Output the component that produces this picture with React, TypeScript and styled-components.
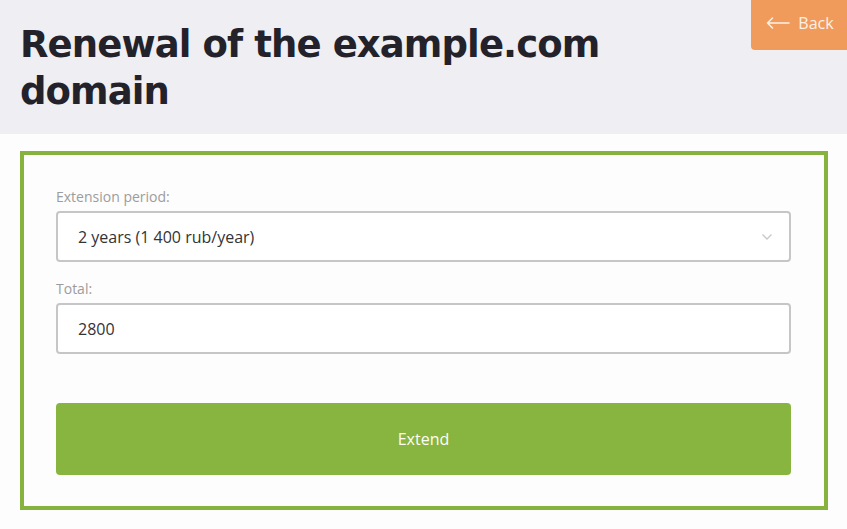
import React from 'react';
import styled, { createGlobalStyle } from 'styled-components';

const GlobalStyle = createGlobalStyle`
    html, body {
        margin: 0;
        padding: 0;
        background: #fdfdfd;
        font-family: "Open Sans", "Liberation Sans", sans-serif;
    }
`;

const App: React.FC = () => {
    return (
        <Page>
            <GlobalStyle />
            <Header>
                <Title>Renewal of the example.com domain</Title>
                <BackButton>
                    <svg width="24" height="12" viewBox="0 0 24 12" fill="none">
                        <path d="M23 6H1.5M6.5 1L1.5 6l5 5" stroke="#fdf1e6" strokeWidth="1.5" strokeLinecap="round" strokeLinejoin="round" />
                    </svg>
                    Back
                </BackButton>
            </Header>
            <FormBox>
                <Field>
                    <Label>Extension period:</Label>
                    <SelectBox>
                        <span>2 years (1 400 rub/year)</span>
                        <svg width="12" height="8" viewBox="0 0 12 8" fill="none">
                            <path d="M1.5 1.5L6 6l4.5-4.5" stroke="#c8c8c8" strokeWidth="1.4" />
                        </svg>
                    </SelectBox>
                </Field>
                <Field>
                    <Label>Total:</Label>
                    <InputBox>2800</InputBox>
                </Field>
                <ExtendButton>Extend</ExtendButton>
            </FormBox>
        </Page>
    );
};

export default App;

const Page = styled.div`
    width: 847px;
    height: 529px;
    overflow: hidden;
`;

const Header = styled.header`
    position: relative;
    height: 134px;
    background-color: #eeeef3;
    padding: 21px 20px 0;
    box-sizing: border-box;
`;

const Title = styled.h1`
    margin: 0;
    max-width: 620px;
    font-family: "DejaVu Sans", "Liberation Sans", sans-serif;
    font-weight: bold;
    font-size: 37px;
    line-height: 47px;
    letter-spacing: -0.9px;
    color: #23222a;
`;

const BackButton = styled.button`
    position: absolute;
    top: 0;
    right: 0;
    width: 96px;
    height: 50px;
    border: none;
    border-radius: 0 0 0 4px;
    background-color: #f09b5b;
    color: #fdf1e6;
    font-family: "Open Sans", sans-serif;
    font-size: 16px;
    display: flex;
    align-items: center;
    justify-content: center;
    gap: 8px;
    padding: 0 0 4px 2px;
    cursor: pointer;
`;

const FormBox = styled.section`
    margin: 17px 19px 0 20px;
    border: 4px solid #86b33e;
    padding: 32px 33px 31px 32px;
    display: flex;
    flex-direction: column;
    gap: 17px;
    background: #fdfdfd;
`;

const Field = styled.div`
    display: flex;
    flex-direction: column;
    gap: 4px;
`;

const Label = styled.label`
    font-size: 14px;
    line-height: 20px;
    color: #9c9c9c;
`;

const SelectBox = styled.div`
    height: 51px;
    box-sizing: border-box;
    border: 2px solid #c6c6c6;
    border-radius: 4px;
    padding: 0 16px 0 20px;
    display: flex;
    align-items: center;
    justify-content: space-between;
    font-size: 16px;
    color: #333338;
    background: #fff;
`;

const InputBox = styled(SelectBox)`
    justify-content: flex-start;
`;

const ExtendButton = styled.button`
    margin-top: 32px;
    height: 72px;
    border: none;
    border-radius: 4px;
    background-color: #88b440;
    color: #fdfdf5;
    font-family: "Open Sans", sans-serif;
    font-size: 16px;
    cursor: pointer;
`;
